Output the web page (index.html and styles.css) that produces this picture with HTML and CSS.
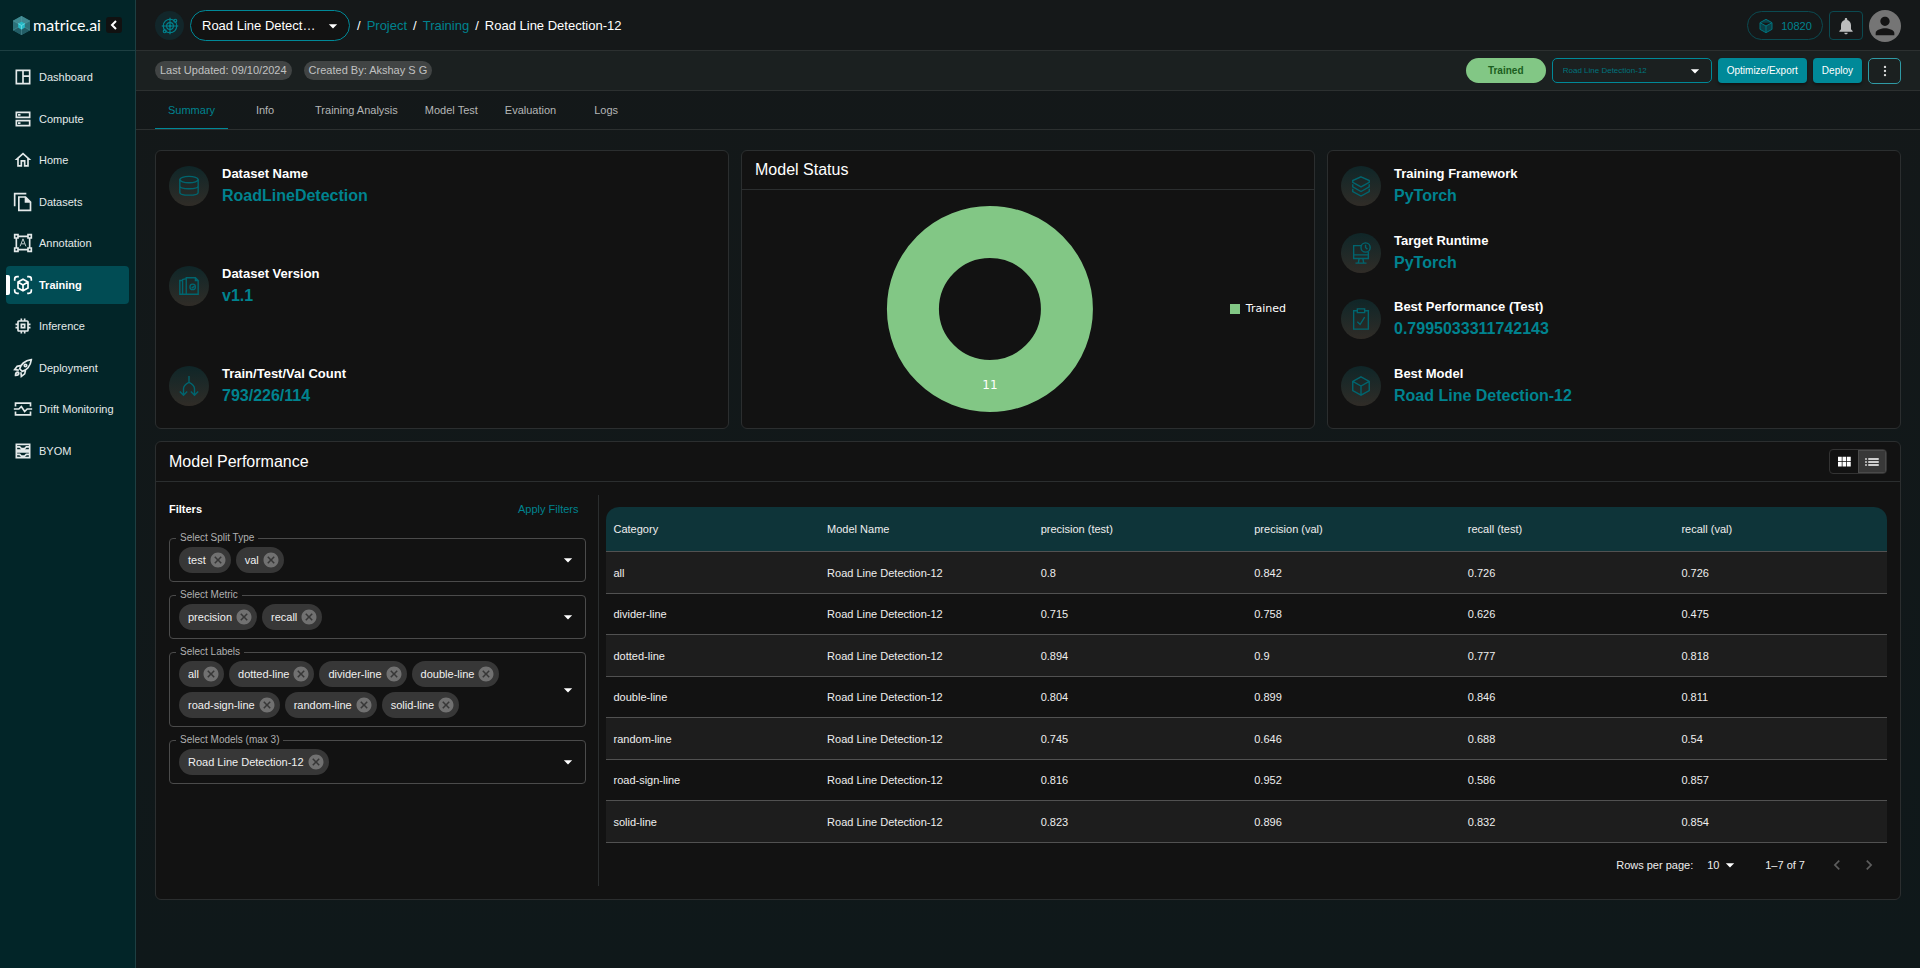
FILE: index.html
```html
<!DOCTYPE html>
<html lang="en">

<head>
    <meta charset="UTF-8">
    <meta name="viewport" content="width=device-width, initial-scale=1.0">
    <title>Road Line Detection-12 | matrice.ai</title>
    <link rel="stylesheet" href="styles.css">
</head>

<body>
    <!-- icon sprite -->
    <svg class="sprite" aria-hidden="true">
        <symbol id="caret" viewBox="0 0 24 24"><path fill="currentColor" d="M7 10l5 5 5-5z" /></symbol>
        <symbol id="cancel" viewBox="0 0 24 24"><path fill="currentColor" d="M12 2C6.47 2 2 6.47 2 12s4.47 10 10 10 10-4.47 10-10S17.53 2 12 2zm5 13.59L15.59 17 12 13.41 8.41 17 7 15.59 10.59 12 7 8.41 8.41 7 12 10.59 15.59 7 17 8.41 13.41 12 17 15.59z" /></symbol>
        <symbol id="left" viewBox="0 0 24 24"><path fill="currentColor" d="M15.41 7.41L14 6l-6 6 6 6 1.41-1.41L10.83 12z" /></symbol>
        <symbol id="right" viewBox="0 0 24 24"><path fill="currentColor" d="M10 6L8.59 7.41 13.17 12l-4.58 4.59L10 18l6-6z" /></symbol>
        <symbol id="cube" viewBox="0 0 24 24"><path d="M12 2l9 5v10l-9 5-9-5V7zM3 7l9 5 9-5M12 12v10" /></symbol>
    </svg>

    <aside class="sidebar">
        <div class="brand">
            <svg class="logo" viewBox="0 0 18 20">
                <path d="M9 0l9 5v10l-9 5-9-5V5z" fill="#2c7179" />
                <path d="M9 0l9 5-9 5-9-5z" fill="#3f8890" />
                <path d="M9 10l9 5-9 5-9-5z" fill="#225d66" />
                <path d="M9 0v20M0 5l18 10M18 5L0 15" stroke="#5c9ca2" stroke-width=".5" fill="none" />
                <path d="M9 6l3.500 2v4L9 14.500 5.500 12V8z" fill="#25b9c6" />
                <path d="M5.500 8L9 10l3.500-2M9 10v4" stroke="#7fe3ea" stroke-width=".7" fill="none" />
            </svg>
            <span class="brand-name">matrice.ai</span>
            <button class="collapse" type="button" aria-label="Collapse menu">
                <svg viewBox="0 0 16 16"><path d="M10 4L6 8l4 4" fill="none" stroke="#fff" stroke-width="2" /></svg>
            </button>
        </div>
        <nav class="menu">
            <a href="#">
                <svg viewBox="0 0 24 24"><path d="M4 4h16v16H4zM12 4v16M12 11h8" /></svg>
                Dashboard
            </a>
            <a href="#">
                <svg viewBox="0 0 24 24"><path d="M4 4h16v6H4zM4 14h16v6H4zM6 7h3M6 17h3" /></svg>
                Compute
            </a>
            <a href="#">
                <svg viewBox="0 0 24 24"><path class="solid" d="M12 5.690l5 4.500V18h-2v-6H9v6H7v-7.810l5-4.500M12 3L2 12h3v8h6v-6h2v6h6v-8h3L12 3z" /></svg>
                Home
            </a>
            <a href="#">
                <svg viewBox="0 0 24 24"><path d="M2 17V2h14M7 6h8l6 6v10H7z" /><path class="solid" d="M14 5v8h8z" /></svg>
                Datasets
            </a>
            <a href="#">
                <svg viewBox="0 0 24 24"><path d="M2 2h4v4H2zM18 2h4v4h-4zM2 18h4v4H2zM18 18h4v4h-4zM6 4h12M6 20h12M4 6v12M20 6v12" /><path class="fine" d="M8.500 16L12 7l3.500 9M10 13h4" /></svg>
                Annotation
            </a>
            <a href="#" class="active">
                <svg viewBox="0 0 24 24"><path d="M2 7V5a3 3 0 0 1 3-3h2M17 2h2a3 3 0 0 1 3 3v2M22 17v2a3 3 0 0 1-3 3h-2M7 22H5a3 3 0 0 1-3-3v-2" /><path d="M12 5l6 3.500v7L12 19l-6-3.500v-7zM6 8.500l6 3.500 6-3.500M12 12v7" /></svg>
                Training
            </a>
            <a href="#">
                <svg viewBox="0 0 24 24"><path class="solid" d="M15 9H9v6h6V9zm-2 4h-2v-2h2v2zm8-2V9h-2V7c0-1.100-.9-2-2-2h-2V3h-2v2h-2V3H9v2H7c-1.100 0-2 .9-2 2v2H3v2h2v2H3v2h2v2c0 1.100.9 2 2 2h2v2h2v-2h2v2h2v-2h2c1.100 0 2-.9 2-2v-2h2v-2h-2v-2h2zm-4 6H7V7h10v10z" /></svg>
                Inference
            </a>
            <a href="#">
                <svg viewBox="0 0 24 24"><path d="M8 13c1-5 6-10 14-11-1 8-6 13-11 14zM9 9l-4 1-3 4 5 .5M15 15l-1 4-4 3-.5-5M3 21c0-3 1-4 3-4 1 1 1 1 1 1 0 2-1 3-4 3z" /><circle cx="15" cy="9" r="1.500" /></svg>
                Deployment
            </a>
            <a href="#">
                <svg viewBox="0 0 24 24"><path d="M3 9V5h18v4M3 15v4h18v-4M1 12h6l3-3 4 6 3-3h6" /></svg>
                Drift Monitoring
            </a>
            <a href="#">
                <svg viewBox="0 0 24 24"><path d="M4 4h16v7H4zM4 13h16v7H4zM4 7h4l2 2h4l2-2h4M4 16h4l2 2h4l2-2h4" /></svg>
                BYOM
            </a>
        </nav>
    </aside>

    <div class="page">
        <header class="topbar">
            <span class="project-icon">
                <svg viewBox="0 0 24 24"><circle cx="12" cy="12" r="9" /><circle cx="12" cy="12" r="4.500" /><circle cx="12" cy="12" r="1" /><path d="M12 1v22M1 12h22" /><circle cx="19" cy="5" r="2" /><circle cx="5" cy="19" r="2" /></svg>
            </span>
            <div class="project-select">
                <select aria-label="Project">
                    <option>Road Line Detect…</option>
                </select>
                <svg class="caret"><use href="#caret" /></svg>
            </div>
            <nav class="breadcrumb">
                <span>/</span><a href="#">Project</a><span>/</span><a href="#">Training</a><span>/</span><strong>Road Line Detection-12</strong>
            </nav>
            <div class="account">
                <button class="credits" type="button">
                    <svg viewBox="0 0 24 24"><use href="#cube" /></svg>
                    10820
                </button>
                <button class="bell" type="button" aria-label="Notifications">
                    <svg viewBox="0 0 24 24"><path fill="currentColor" d="M12 22c1.100 0 2-.9 2-2h-4c0 1.100.89 2 2 2zm6-6v-5c0-3.070-1.640-5.640-4.500-6.320V4c0-.83-.67-1.500-1.500-1.500s-1.500.67-1.500 1.500v.68C7.630 5.360 6 7.920 6 11v5l-2 2v1h16v-1l-2-2z" /></svg>
                </button>
                <button class="avatar" type="button" aria-label="Profile">
                    <svg viewBox="0 0 24 24"><path fill="currentColor" d="M12 12c2.210 0 4-1.790 4-4s-1.790-4-4-4-4 1.790-4 4 1.790 4 4 4zm0 2c-2.670 0-8 1.340-8 4v2h16v-2c0-2.660-5.330-4-8-4z" /></svg>
                </button>
            </div>
        </header>

        <div class="infobar">
            <span class="tag">Last Updated: 09/10/2024</span>
            <span class="tag">Created By: Akshay S G</span>
            <div class="actions">
                <span class="status">Trained</span>
                <div class="model-select">
                    <select aria-label="Model">
                        <option>Road Line Detection-12</option>
                    </select>
                    <svg class="caret"><use href="#caret" /></svg>
                </div>
                <button class="btn" type="button">Optimize/Export</button>
                <button class="btn" type="button">Deploy</button>
                <button class="more" type="button" aria-label="More">
                    <svg viewBox="0 0 24 24"><g fill="currentColor"><circle cx="12" cy="5" r="2" /><circle cx="12" cy="12" r="2" /><circle cx="12" cy="19" r="2" /></g></svg>
                </button>
            </div>
        </div>

        <nav class="tabs">
            <a href="#" class="selected">Summary</a>
            <a href="#">Info</a>
            <a href="#">Training Analysis</a>
            <a href="#">Model Test</a>
            <a href="#">Evaluation</a>
            <a href="#">Logs</a>
        </nav>

        <main class="content">
            <div class="cards">
                <section class="card facts">
                    <div class="fact">
                        <span class="fact-icon"><svg viewBox="0 0 24 24"><ellipse cx="12" cy="5" rx="10" ry="3.500" /><path d="M2 5v14c0 2 4 3 10 3s10-1 10-3V5M2 12c0 2 4 3 10 3s10-1 10-3" /></svg></span>
                        <div><h3>Dataset Name</h3><p>RoadLineDetection</p></div>
                    </div>
                    <div class="fact">
                        <span class="fact-icon"><svg viewBox="0 0 24 24"><path d="M9 21V3h10l3 3v15H2V6h3M5 21V5l4-1M19 3v3h3" /><circle cx="16" cy="13" r="3" /><path d="M15 13l1 1 2-2" /></svg></span>
                        <div><h3>Dataset Version</h3><p>v1.1</p></div>
                    </div>
                    <div class="fact">
                        <span class="fact-icon"><svg viewBox="0 0 24 24"><path d="M12 1v7M12 8c-4 2-6 4-6 7v7M12 8c4 2 6 4 6 7v7M2 18l4 4 4-4M14 18l4 4 4-4" /></svg></span>
                        <div><h3>Train/Test/Val Count</h3><p>793/226/114</p></div>
                    </div>
                </section>

                <section class="card">
                    <h2 class="card-head">Model Status</h2>
                    <div class="chart">
                        <svg class="donut" viewBox="0 0 206 206">
                            <circle cx="103" cy="103" r="77" fill="none" stroke="#82c785" stroke-width="52" />
                            <text x="103" y="183" text-anchor="middle">11</text>
                        </svg>
                        <span class="legend">Trained</span>
                    </div>
                </section>

                <section class="card facts">
                    <div class="fact">
                        <span class="fact-icon"><svg viewBox="0 0 24 24"><path d="M12 2l9 4v2l-9 5-9-5V6zM3 10v3l9 5 9-5v-3M3 15v3l9 5 9-5v-3" /></svg></span>
                        <div><h3>Training Framework</h3><p>PyTorch</p></div>
                    </div>
                    <div class="fact">
                        <span class="fact-icon"><svg viewBox="0 0 24 24"><path d="M12 4H4v14h16v-7M4 14h16M10 18l-1 5M14 18l1 5M6 23h12" /><circle cx="17" cy="6" r="5" /><path d="M17 3v3l2 2" /></svg></span>
                        <div><h3>Target Runtime</h3><p>PyTorch</p></div>
                    </div>
                    <div class="fact">
                        <span class="fact-icon"><svg viewBox="0 0 24 24"><path d="M8 3H4v20h16V3h-4M8 1h8v4H8zM8 15l3 3 5-8" /></svg></span>
                        <div><h3>Best Performance (Test)</h3><p>0.7995033311742143</p></div>
                    </div>
                    <div class="fact">
                        <span class="fact-icon"><svg viewBox="0 0 24 24"><use href="#cube" /></svg></span>
                        <div><h3>Best Model</h3><p>Road Line Detection-12</p></div>
                    </div>
                </section>
            </div>

            <section class="card performance">
                <div class="card-head">
                    <h2>Model Performance</h2>
                    <div class="toggle">
                        <button type="button" aria-label="Grid view"><svg viewBox="0 0 24 24"><path fill="currentColor" d="M4 11h5V5H4v6zm0 7h5v-6H4v6zm6 0h5v-6h-5v6zm6 0h5v-6h-5v6zm-6-7h5V5h-5v6zm6-6v6h5V5h-5z" /></svg></button>
                        <button type="button" class="on" aria-label="List view"><svg viewBox="0 0 24 24"><path fill="currentColor" d="M3 13h2v-2H3v2zm0 4h2v-2H3v2zm0-8h2V7H3v2zm4 4h14v-2H7v2zm0 4h14v-2H7v2zM7 7v2h14V7H7z" /></svg></button>
                    </div>
                </div>
                <div class="performance-body">
                    <form class="filters">
                        <div class="filters-head">
                            <h3>Filters</h3>
                            <button type="button">Apply Filters</button>
                        </div>
                        <fieldset>
                            <legend>Select Split Type</legend>
                            <div class="chips">
                                <span class="chip">test<button type="button" aria-label="Remove test"><svg><use href="#cancel" /></svg></button></span>
                                <span class="chip">val<button type="button" aria-label="Remove val"><svg><use href="#cancel" /></svg></button></span>
                            </div>
                            <button class="open" type="button" aria-label="Open split types"><svg class="caret"><use href="#caret" /></svg></button>
                        </fieldset>
                        <fieldset>
                            <legend>Select Metric</legend>
                            <div class="chips">
                                <span class="chip">precision<button type="button" aria-label="Remove precision"><svg><use href="#cancel" /></svg></button></span>
                                <span class="chip">recall<button type="button" aria-label="Remove recall"><svg><use href="#cancel" /></svg></button></span>
                            </div>
                            <button class="open" type="button" aria-label="Open metrics"><svg class="caret"><use href="#caret" /></svg></button>
                        </fieldset>
                        <fieldset>
                            <legend>Select Labels</legend>
                            <div class="chips">
                                <span class="chip">all<button type="button" aria-label="Remove all"><svg><use href="#cancel" /></svg></button></span>
                                <span class="chip">dotted-line<button type="button" aria-label="Remove dotted-line"><svg><use href="#cancel" /></svg></button></span>
                                <span class="chip">divider-line<button type="button" aria-label="Remove divider-line"><svg><use href="#cancel" /></svg></button></span>
                                <span class="chip">double-line<button type="button" aria-label="Remove double-line"><svg><use href="#cancel" /></svg></button></span>
                                <span class="chip">road-sign-line<button type="button" aria-label="Remove road-sign-line"><svg><use href="#cancel" /></svg></button></span>
                                <span class="chip">random-line<button type="button" aria-label="Remove random-line"><svg><use href="#cancel" /></svg></button></span>
                                <span class="chip">solid-line<button type="button" aria-label="Remove solid-line"><svg><use href="#cancel" /></svg></button></span>
                            </div>
                            <button class="open" type="button" aria-label="Open labels"><svg class="caret"><use href="#caret" /></svg></button>
                        </fieldset>
                        <fieldset>
                            <legend>Select Models (max 3)</legend>
                            <div class="chips">
                                <span class="chip">Road Line Detection-12<button type="button" aria-label="Remove Road Line Detection-12"><svg><use href="#cancel" /></svg></button></span>
                            </div>
                            <button class="open" type="button" aria-label="Open models"><svg class="caret"><use href="#caret" /></svg></button>
                        </fieldset>
                    </form>

                    <div class="results">
                        <table>
                            <thead>
                                <tr><th>Category</th><th>Model Name</th><th>precision (test)</th><th>precision (val)</th><th>recall (test)</th><th>recall (val)</th></tr>
                            </thead>
                            <tbody>
                                <tr><td>all</td><td>Road Line Detection-12</td><td>0.8</td><td>0.842</td><td>0.726</td><td>0.726</td></tr>
                                <tr><td>divider-line</td><td>Road Line Detection-12</td><td>0.715</td><td>0.758</td><td>0.626</td><td>0.475</td></tr>
                                <tr><td>dotted-line</td><td>Road Line Detection-12</td><td>0.894</td><td>0.9</td><td>0.777</td><td>0.818</td></tr>
                                <tr><td>double-line</td><td>Road Line Detection-12</td><td>0.804</td><td>0.899</td><td>0.846</td><td>0.811</td></tr>
                                <tr><td>random-line</td><td>Road Line Detection-12</td><td>0.745</td><td>0.646</td><td>0.688</td><td>0.54</td></tr>
                                <tr><td>road-sign-line</td><td>Road Line Detection-12</td><td>0.816</td><td>0.952</td><td>0.586</td><td>0.857</td></tr>
                                <tr><td>solid-line</td><td>Road Line Detection-12</td><td>0.823</td><td>0.896</td><td>0.832</td><td>0.854</td></tr>
                            </tbody>
                        </table>
                        <div class="pagination">
                            <label for="rows">Rows per page:</label>
                            <div class="rows-select">
                                <select id="rows">
                                    <option>10</option>
                                </select>
                                <svg class="caret"><use href="#caret" /></svg>
                            </div>
                            <span class="range">1–7 of 7</span>
                            <button type="button" disabled aria-label="Previous page"><svg><use href="#left" /></svg></button>
                            <button type="button" disabled aria-label="Next page"><svg><use href="#right" /></svg></button>
                        </div>
                    </div>
                </div>
            </section>
        </main>
    </div>
</body>

</html>
```
FILE: styles.css
```css
* {
    box-sizing: border-box;
}

body {
    margin: 0;
    min-height: 100vh;
    display: flex;
    background: linear-gradient(#141819, #0f181a);
    color: #fff;
    font: 11px/16px "Liberation Sans", Arial, sans-serif;
}

a {
    color: inherit;
    text-decoration: none;
}

button,
select {
    margin: 0;
    padding: 0;
    border: 0;
    background: none;
    color: inherit;
    font: inherit;
    cursor: pointer;
}

select {
    appearance: none;
    flex: 1;
    min-width: 0;
}

h2,
h3,
p {
    margin: 0;
}

.sprite {
    position: absolute;
    width: 0;
    height: 0;
}

.caret {
    width: 20px;
    height: 20px;
    flex: none;
    color: #fff;
}

/* sidebar */

.sidebar {
    flex: 0 0 136px;
    background: #022528;
    border-right: 1px solid #1d3f42;
}

.brand {
    height: 51px;
    padding-left: 13px;
    display: flex;
    align-items: center;
    border-bottom: 1px solid #1d3f42;
}

.logo {
    width: 17px;
    height: 19px;
}

.brand-name {
    width: 76px;
    padding-left: 3px;
    font: 16px/20px Lato, sans-serif;
}

.collapse {
    width: 16px;
    height: 16px;
    border-radius: 3px;
    background: #111;
}

.collapse svg {
    display: block;
}

.menu {
    height: 419px;
    padding: 7px 6px 0;
    display: flex;
    flex-direction: column;
    justify-content: space-between;
}

.menu a {
    height: 38px;
    padding-left: 7px;
    display: flex;
    align-items: center;
    gap: 6px;
    border-radius: 4px;
    color: #e4eaea;
}

.menu svg {
    width: 20px;
    height: 20px;
    fill: none;
    stroke: currentColor;
    stroke-width: 2;
}

.menu .solid {
    fill: currentColor;
    stroke: none;
}

.menu .fine {
    stroke-width: 1;
}

.menu .active {
    padding-left: 0;
    background: #014c54;
    color: #fff;
    font-weight: bold;
}

/* the marker plus its negative margin take up 1px, the gap takes 6px */
.menu .active::before {
    content: "";
    width: 4px;
    height: 20px;
    margin-right: -3px;
    border-radius: 0 2px 2px 0;
    background: #fff;
}

/* header rows */

.page {
    flex: 1;
    min-width: 0;
}

.topbar,
.infobar,
.tabs {
    padding: 0 19px;
    display: flex;
    align-items: center;
    border-bottom: 1px solid #2c3030;
}

.topbar {
    height: 51px;
    padding-top: 1px;
    gap: 6px;
    font-size: 13px;
    background: #151819;
}

.project-icon {
    width: 29px;
    height: 29px;
    display: grid;
    place-items: center;
    border-radius: 50%;
    background: #12262a;
}

.project-icon svg {
    width: 18px;
    fill: none;
    stroke: #00838f;
    stroke-width: 1.5;
}

.project-select {
    width: 160px;
    height: 31px;
    padding: 0 6px 0 11px;
    display: flex;
    align-items: center;
    border: 1px solid #008998;
    border-radius: 16px;
    background: #121212;
}

.breadcrumb {
    display: flex;
    gap: 6px;
    padding-left: 1px;
}

.breadcrumb a {
    color: #00838f;
}

.breadcrumb strong {
    font-weight: normal;
}

.account {
    margin-left: auto;
    display: flex;
    align-items: center;
    gap: 6px;
}

.credits {
    width: 76px;
    height: 29px;
    display: flex;
    align-items: center;
    justify-content: center;
    gap: 7px;
    border: 1px solid #0b4a51;
    border-radius: 15px;
    color: #00838f;
    font-size: 11px;
}

.credits svg {
    width: 16px;
    height: 16px;
    fill: #0b4047;
    stroke: #00737d;
    stroke-width: 1.5;
}

.bell {
    width: 34px;
    height: 29px;
    display: grid;
    place-items: center;
    border: 1px solid #0b4a51;
    border-radius: 4px;
    color: #bcbdbd;
}

.bell svg {
    width: 20px;
}

.avatar {
    width: 32px;
    height: 32px;
    border-radius: 50%;
    background: #757575;
    color: #141414;
}

.avatar svg {
    display: block;
    width: 28px;
    margin: 0 auto;
}

.infobar {
    height: 40px;
    gap: 12px;
    background: #1b2020;
}

.tag {
    height: 19px;
    padding: 0 5px;
    border-radius: 10px;
    background: #414444;
    color: #c0c1c1;
    line-height: 19px;
}

.actions {
    margin-left: auto;
    display: flex;
    align-items: center;
    gap: 6px;
    font-size: 10px;
}

.status {
    width: 80px;
    border-radius: 13px;
    background: #82c785;
    color: #1b5e20;
    font-weight: bold;
    line-height: 25px;
    text-align: center;
}

.model-select {
    width: 160px;
    height: 25px;
    padding: 0 6px 0 10px;
    display: flex;
    align-items: center;
    border: 1px solid #008998;
    border-radius: 5px;
    color: #00737d;
    font-size: 8px;
}

.btn {
    height: 25px;
    padding: 0 9px;
    border-radius: 4px;
    background: #008998;
    box-shadow: 0 2px 3px #0006;
}

.more {
    width: 33px;
    height: 26px;
    display: grid;
    place-items: center;
    border: 1px solid #2f9aa5;
    border-radius: 5px;
    color: #ddd;
}

.more svg {
    width: 14px;
}

.tabs {
    height: 39px;
    align-items: stretch;
    gap: 1px;
    color: #b4b6b6;
}

.tabs a {
    min-width: 72px;
    padding: 0 13px;
    border-bottom: 1px solid transparent;
    line-height: 38px;
    text-align: center;
}

.tabs .selected {
    border-color: #008998;
    color: #00838f;
}

/* cards */

.content {
    padding: 20px 19px;
}

.cards {
    display: grid;
    grid-template-columns: repeat(3, 1fr);
    gap: 12px;
}

.card {
    border: 1px solid #2b2e2f;
    border-radius: 6px;
    background: #121212;
}

.card-head {
    padding: 0 13px;
    border-bottom: 1px solid #2b2e2f;
    font: 16px/38px "Liberation Sans", Arial, sans-serif;
}

.facts {
    padding: 13px 13px 20px;
    display: flex;
    flex-direction: column;
    justify-content: space-between;
}

.fact {
    display: flex;
    align-items: center;
    gap: 13px;
}

.fact-icon {
    width: 40px;
    height: 40px;
    display: grid;
    place-items: center;
    border-radius: 50%;
    background: linear-gradient(#0f2628, #302c27);
}

.fact-icon svg {
    width: 22px;
    height: 22px;
    fill: none;
    stroke: #00656f;
    stroke-width: 1.5;
}

.fact h3 {
    font-size: 13px;
    line-height: 20px;
}

.fact p {
    color: #00838f;
    font-size: 16px;
    font-weight: bold;
    line-height: 24px;
}

.chart {
    padding: 16px 28px 16px 8px;
    display: flex;
    align-items: center;
    font: 11px/14px "DejaVu Sans", sans-serif;
}

.donut {
    flex: 1;
    height: 206px;
    font-size: 12px;
    fill: #fff;
}

.legend {
    display: flex;
    align-items: center;
    gap: 6px;
}

.legend::before {
    content: "";
    width: 10px;
    height: 10px;
    background: #82c785;
}

/* model performance */

.performance {
    margin-top: 12px;
}

.performance .card-head {
    height: 40px;
    display: flex;
    align-items: center;
    justify-content: space-between;
}

.performance h2 {
    font: inherit;
}

.toggle {
    display: flex;
    border: 1px solid #333;
    border-radius: 4px;
    overflow: hidden;
}

.toggle button {
    width: 28px;
    height: 23px;
    display: grid;
    place-items: center;
}

.toggle .on {
    background: #383838;
    box-shadow: inset 0 0 0 1px #4a4a4a;
}

.toggle svg {
    width: 18px;
}

.performance-body {
    padding: 13px;
    display: flex;
}

.filters {
    flex: 0 0 25%;
    padding-right: 12px;
    border-right: 1px solid #2b2e2f;
}

.filters-head {
    height: 28px;
    margin-bottom: 10px;
    padding-right: 7px;
    display: flex;
    align-items: center;
    justify-content: space-between;
}

.filters-head h3 {
    font-size: 11px;
}

.filters-head button {
    color: #00838f;
}

fieldset {
    min-width: 0;
    margin: 0 0 8px;
    padding: 4px 7px 8px 9px;
    display: flex;
    align-items: center;
    border: 1px solid #4b4b4b;
    border-radius: 4px;
}

legend {
    margin-left: -3px;
    padding: 0 4px;
    color: #b0b0b0;
    font-size: 10px;
    line-height: 10px;
}

.chips {
    flex: 1;
    display: flex;
    flex-wrap: wrap;
    gap: 5px;
    padding-right: 30px;
}

.chip {
    height: 26px;
    padding: 0 4px 0 9px;
    display: flex;
    align-items: center;
    gap: 3px;
    border-radius: 13px;
    background: #373737;
    color: #f0f0f0;
}

.chip svg {
    display: block;
    width: 18px;
    height: 18px;
    color: #717171;
}

.open svg {
    display: block;
}

.results {
    flex: 1;
    margin-left: 7px;
    padding-top: 12px;
}

table {
    width: 100%;
    border-spacing: 0;
    table-layout: fixed;
}

th,
td {
    height: 41px;
    padding: 0 8px;
    border-bottom: 1px solid #515151;
    color: #eee;
    font-weight: normal;
    text-align: left;
}

th {
    height: 45px;
    background: #0e3439;
}

th:first-child {
    border-top-left-radius: 13px;
}

th:last-child {
    border-top-right-radius: 13px;
}

tbody tr:nth-child(odd) td {
    height: 42px;
    background: #1d1d1d;
}

.pagination {
    height: 43px;
    padding-right: 2px;
    display: flex;
    align-items: center;
    justify-content: flex-end;
    color: #eee;
}

.rows-select {
    margin: 0 25px 0 14px;
    display: flex;
    align-items: center;
}

.range {
    margin-right: 16px;
}

.pagination button {
    width: 32px;
    height: 32px;
    display: grid;
    place-items: center;
    color: #5c5c5c;
}

.pagination button svg {
    width: 20px;
    height: 20px;
}
```
